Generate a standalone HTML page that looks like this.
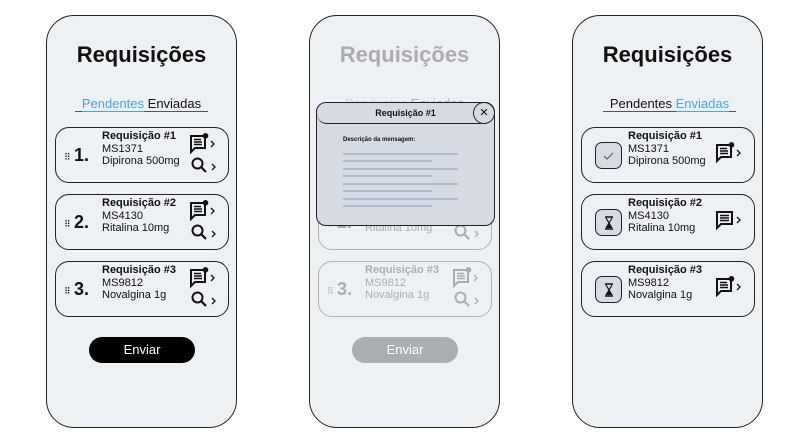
<!DOCTYPE html><html><head><meta charset="utf-8"><style>
*{box-sizing:border-box;margin:0;padding:0}
body{width:811px;height:444px;background:#fff;position:relative;overflow:hidden;font-family:"Liberation Sans",Arial,sans-serif;color:#111}
.ph{position:absolute;top:15px;width:191px;height:413px;border:1.3px solid #222;border-radius:28px;background:#eef1f4}
.t{position:absolute;top:26px;left:0;width:100%;text-align:center;font-size:22px;font-weight:bold}
.tabs{position:absolute;top:80px;left:28px;width:133px;text-align:center;font-size:13px;border-bottom:1px solid #555;height:16px;line-height:15px}
.tabs .a{color:#4aa3e8;border-bottom:1.5px solid #4aa3e8}
.c{position:absolute;left:8px;width:174px;height:56px;border:1.2px solid #222;border-radius:14px;background:#eef1f4}
.c .n{position:absolute;left:18px;top:17px;font-size:18px;font-weight:bold}
.c .d{position:absolute;left:8px;top:24px;font-size:9px;letter-spacing:-1px}
.c .tx{position:absolute;left:46px;top:2px;font-size:11px;line-height:12.5px}
.ic{position:absolute}
.btn{position:absolute;left:42px;top:321px;width:106px;height:26px;background:#000;color:#fff;border-radius:13px;text-align:center;line-height:26px;font-size:13px}
.st{position:absolute;left:13px;top:14px;width:27px;height:27px;border:1.3px solid #222;border-radius:7px;background:#d7dbe3}
</style></head><body>

<svg width="0" height="0" style="position:absolute"><defs>
<g id="msg"><path d="M1 3h14v12H5l-4 4z" fill="none" stroke="#111" stroke-width="2"/><path d="M4 6.5h7M4 9h8M4 11.5h8" stroke="#111" stroke-width="1.6"/><circle cx="15.5" cy="2.8" r="2.8" fill="#111"/><path d="M21 8l3 3-3 3" fill="none" stroke="#111" stroke-width="1.3"/></g>
<g id="msg2"><path d="M1 3h15v12H5l-4 4z" fill="none" stroke="#111" stroke-width="2"/><path d="M4 6.5h9M4 9h9M4 11.5h9" stroke="#111" stroke-width="1.6"/><path d="M21 8l3 3-3 3" fill="none" stroke="#111" stroke-width="1.3"/></g>
<g id="srch"><circle cx="6.5" cy="6.5" r="5" fill="none" stroke="#111" stroke-width="2"/><path d="M10 10l5 5" stroke="#111" stroke-width="2.2"/><path d="M21 7l3 3-3 3" fill="none" stroke="#111" stroke-width="1.3"/></g>
<g id="hg"><path d="M3 1h8M3 13h8" stroke="#111" stroke-width="1.5"/><path d="M4 2l3 5-3 5M10 2l-3 5 3 5" fill="none" stroke="#111" stroke-width="1.2"/><path d="M4 12l3-4 3 4z" fill="#111"/></g>
</defs></svg>

<!-- left -->
<div class="ph" style="left:46px">
<div class="t">Requisições</div>
<div class="tabs"><span class="a">Pendentes</span> Enviadas</div>
<div class="c" style="top:111px"><span class="d">⠿</span><span class="n">1.</span><div class="tx"><b>Requisição #1</b><br>MS1371<br>Dipirona 500mg</div><svg class="ic" style="left:134px;top:5px" width="26" height="22"><use href="#msg"/></svg><svg class="ic" style="left:135px;top:29px" width="26" height="18"><use href="#srch"/></svg></div>
<div class="c" style="top:178px"><span class="d">⠿</span><span class="n">2.</span><div class="tx"><b>Requisição #2</b><br>MS4130<br>Ritalina 10mg</div><svg class="ic" style="left:134px;top:5px" width="26" height="22"><use href="#msg"/></svg><svg class="ic" style="left:135px;top:29px" width="26" height="18"><use href="#srch"/></svg></div>
<div class="c" style="top:245px"><span class="d">⠿</span><span class="n">3.</span><div class="tx"><b>Requisição #3</b><br>MS9812<br>Novalgina 1g</div><svg class="ic" style="left:134px;top:5px" width="26" height="22"><use href="#msg"/></svg><svg class="ic" style="left:135px;top:29px" width="26" height="18"><use href="#srch"/></svg></div>
<div class="btn">Enviar</div>
</div>

<!-- middle -->
<div class="ph" style="left:309px">
<div style="opacity:.3">
<div class="t">Requisições</div>
<div class="tabs"><span class="a">Pendentes</span> Enviadas</div>
<div class="c" style="top:178px"><span class="d">⠿</span><span class="n">2.</span><div class="tx"><b>Requisição #2</b><br>MS4130<br>Ritalina 10mg</div><svg class="ic" style="left:135px;top:29px" width="26" height="18"><use href="#srch"/></svg></div>
<div class="c" style="top:245px"><span class="d">⠿</span><span class="n">3.</span><div class="tx"><b>Requisição #3</b><br>MS9812<br>Novalgina 1g</div><svg class="ic" style="left:134px;top:5px" width="26" height="22"><use href="#msg"/></svg><svg class="ic" style="left:135px;top:29px" width="26" height="18"><use href="#srch"/></svg></div>
</div>
<div class="btn" style="background:#aaadb2">Enviar</div>
<div style="position:absolute;left:6px;top:86px;width:179px;height:124px;background:#d6dae2;border:1.3px solid #222;border-radius:10px">
<div style="height:21px;border-bottom:1.2px solid #222;border-radius:10px;text-align:center;font-size:9px;font-weight:bold;line-height:20px">Requisição #1</div>
<div style="position:absolute;right:-1px;top:-1px;width:22px;height:22px;border:1.2px solid #222;border-radius:50%;text-align:center;line-height:19px;font-size:15px">×</div>
<div style="position:absolute;left:26px;top:34px;font-size:6px;font-weight:bold">Descrição da mensagem:</div>
<svg style="position:absolute;left:26px;top:48px" width="120" height="60" stroke="#9aa8c8" stroke-width="1.3"><path d="M0 3h115M0 10h89M0 18h115M0 25h89M0 33h115M0 40h89M0 48h115M0 55h89"/></svg>
</div>
</div>

<!-- right -->
<div class="ph" style="left:572px">
<div class="t">Requisições</div>
<div class="tabs" style="left:30px">Pendentes <span class="a">Enviadas</span></div>
<div class="c" style="top:111px"><div class="st"><svg width="25" height="25"><path d="M8 13l3 3 6-6" fill="none" stroke="#555" stroke-width="1"/></svg></div><div class="tx" style="left:46px"><b>Requisição #1</b><br>MS1371<br>Dipirona 500mg</div><svg class="ic" style="left:134px;top:14px" width="26" height="22"><use href="#msg"/></svg></div>
<div class="c" style="top:178px"><div class="st"><svg style="margin:6px 0 0 6px" width="14" height="14"><use href="#hg"/></svg></div><div class="tx" style="left:46px"><b>Requisição #2</b><br>MS4130<br>Ritalina 10mg</div><svg class="ic" style="left:134px;top:14px" width="26" height="22"><use href="#msg2"/></svg></div>
<div class="c" style="top:245px"><div class="st"><svg style="margin:6px 0 0 6px" width="14" height="14"><use href="#hg"/></svg></div><div class="tx" style="left:46px"><b>Requisição #3</b><br>MS9812<br>Novalgina 1g</div><svg class="ic" style="left:134px;top:14px" width="26" height="22"><use href="#msg"/></svg></div>
</div>
</body></html>
